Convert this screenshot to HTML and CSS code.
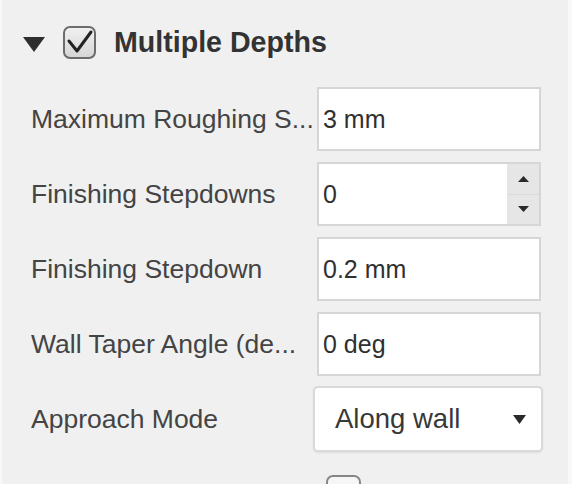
FILE: index.html
```html
<!DOCTYPE html>
<html>
<head>
<meta charset="utf-8">
<link rel="stylesheet" href="styles.css">
</head>
<body>
<div class="panel">
  <div class="group-head">
    <svg class="twisty" width="22" height="15" viewBox="0 0 22 15"><polygon points="0,0 22,0 11,15" fill="#2e2e2e"/></svg>
    <span class="check checked">
      <svg width="29" height="29" viewBox="0 0 29 29"><polyline points="4,13 12,23 26,4" fill="none" stroke="#222" stroke-width="3" stroke-linejoin="round" stroke-linecap="round"/></svg>
    </span>
    <span class="group-title">Multiple Depths</span>
  </div>
  <div class="form">
    <div class="label">Maximum Roughing S...</div>
    <div class="field"><span class="value">3 mm</span></div>

    <div class="label">Finishing Stepdowns</div>
    <div class="field spin">
      <span class="value">0</span>
      <div class="spin-btns">
        <span class="spin-btn"><svg width="11" height="6" viewBox="0 0 11 6"><polygon points="0,6 11,6 5.5,0" fill="#2a2a2a"/></svg></span>
        <span class="spin-btn spin-down"><svg width="11" height="6" viewBox="0 0 11 6"><polygon points="0,0 11,0 5.5,6" fill="#2a2a2a"/></svg></span>
      </div>
    </div>

    <div class="label">Finishing Stepdown</div>
    <div class="field"><span class="value">0.2 mm</span></div>

    <div class="label">Wall Taper Angle (de...</div>
    <div class="field"><span class="value">0 deg</span></div>

    <div class="label">Approach Mode</div>
    <div class="select">
      <span class="select-value">Along wall</span>
      <svg width="13" height="9" viewBox="0 0 13 9"><polygon points="0,0 13,0 6.5,9" fill="#2a2a2a"/></svg>
    </div>

    <div class="label"></div>
    <div class="cell"><span class="check small"></span></div>
  </div>
</div>
</body>
</html>
```

FILE: styles.css
```css
html, body {
  margin: 0;
  padding: 0;
}
body {
  width: 572px;
  height: 484px;
  overflow: hidden;
  background: #f8f8f8;
  font-family: "Liberation Sans", Arial, sans-serif;
}
.panel {
  margin-left: 2px;
  width: 566px;
  height: 484px;
  overflow: hidden;
  background: #f0f0f0;
  padding-top: 26px;
  box-sizing: border-box;
}
.group-head {
  display: flex;
  align-items: center;
  height: 33px;
  padding-left: 21px;
}
.twisty {
  margin-top: 3px;
  margin-right: 18px;
  flex: none;
}
.check {
  box-sizing: border-box;
  width: 33px;
  height: 33px;
  border: 2px solid #6c6c6c;
  border-radius: 7px;
  background: linear-gradient(#f0f0f0, #d6d6d6);
  display: flex;
  align-items: center;
  justify-content: center;
  flex: none;
}
.group-title {
  margin-left: 18px;
  font-size: 28.6px;
  font-weight: bold;
  color: #333333;
  white-space: nowrap;
}
.form {
  margin-top: 28px;
  padding-left: 29px;
  display: grid;
  grid-template-columns: 286px 224px;
  grid-auto-rows: 64px;
  row-gap: 11px;
}
.label {
  align-self: center;
  font-size: 26.5px;
  color: #444444;
  white-space: nowrap;
  overflow: hidden;
}
.field {
  box-sizing: border-box;
  border: 2px solid #d6d6d6;
  background: #ffffff;
  display: flex;
  align-items: center;
  padding-left: 4px;
  font-size: 25px;
  color: #303030;
}
.value {
  flex: 1;
  white-space: nowrap;
}
.spin {
  align-items: stretch;
}
.spin .value {
  display: flex;
  align-items: center;
}
.spin-btns {
  width: 32px;
  display: flex;
  flex-direction: column;
  background: #e6e6e6;
}
.spin-btn {
  flex: 1;
  display: flex;
  align-items: center;
  justify-content: center;
}
.spin-down {
  border-top: 1px solid #dadada;
}
.select {
  box-sizing: border-box;
  margin: -1px -2px -1px -4px;
  border: 2px solid #d9d9d9;
  border-radius: 5px;
  box-shadow: 0 1px 2px rgba(0, 0, 0, 0.08);
  background: #ffffff;
  display: flex;
  align-items: center;
  justify-content: space-between;
  padding: 0 15px 0 20px;
  font-size: 27.5px;
  color: #383838;
}
.cell {
  display: flex;
  align-items: flex-start;
}
.check.small {
  margin-top: 13px;
  margin-left: 9px;
  width: 35px;
  border-color: #858585;
  background: #f6f6f6;
}
```
